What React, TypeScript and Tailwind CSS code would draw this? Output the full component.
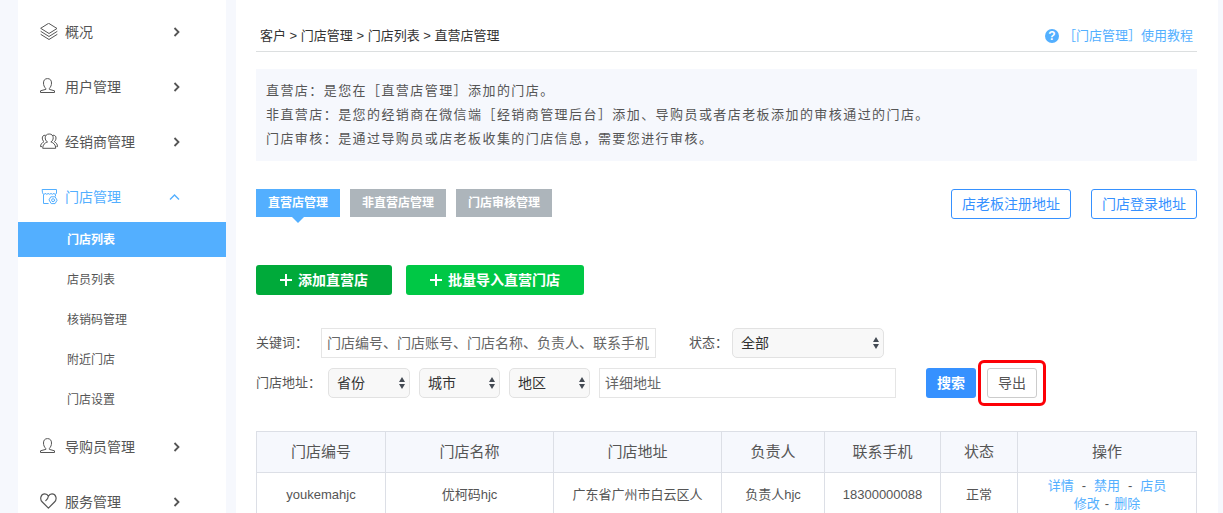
import React from 'react'
import clsx from 'clsx'

const menus = [
  { name: '概况', icon: 'layers' },
  { name: '用户管理', icon: 'user' },
  { name: '经销商管理', icon: 'users' },
  {
    name: '门店管理',
    icon: 'store',
    open: true,
    children: ['门店列表', '店员列表', '核销码管理', '附近门店', '门店设置'],
  },
  { name: '导购员管理', icon: 'user' },
  { name: '服务管理', icon: 'heart' },
]

const tabs = ['直营店管理', '非直营店管理', '门店审核管理']

const stores = [
  {
    code: 'youkemahjc',
    name: '优柯码hjc',
    address: '广东省广州市白云区人',
    owner: '负责人hjc',
    phone: '18300000088',
    status: '正常',
  },
]

function MenuIcon({ type }) {
  return (
    <svg className="h-[18px] w-[18px] shrink-0" viewBox="0 0 18 18" fill="none" stroke="currentColor" strokeWidth="1" strokeLinejoin="round" strokeLinecap="round">
      {type === 'layers' && (
        <>
          <path d="M9 0.5 17 5.5 9 10.5 1 5.5Z" />
          <path d="M1 8.5 9 13.5 17 8.5" />
          <path d="M1 11.5 9 16.5 17 11.5" />
        </>
      )}
      {type === 'user' && (
        <path d="M5.6 10.4C4.3 9 3.5 7.2 3.5 5 3.5 2.2 4.9 0.6 7.5 0.6S11.5 2.2 11.5 5C11.5 7.2 10.7 9 9.4 10.4V11.4L14.5 12.8V14.5H0.5V12.8L5.6 11.4Z" />
      )}
      {type === 'users' && (
        <>
          <path d="M7.2 8.9C5.9 7.9 5.2 6.5 5.2 4.8 5.2 2.4 6.7 1 9.2 1S13.2 2.4 13.2 4.8C13.2 6.5 12.5 7.9 11.2 8.9" />
          <path d="M7.2 8.9C4.8 10 2.7 11.6 2.7 15.3H15.7C15.7 11.6 13.6 10 11.2 8.9" />
          <path d="M5 2.2C3.2 2.2 2.3 3.3 2.3 5 2.3 6.7 2.9 7.8 4 8.7 1.9 9.8 0.5 11.4 0.5 13.6H1.6" />
          <path d="M13.4 2.2C15.1 2.2 16 3.3 16 5 16 6.7 15.4 7.8 14.3 8.7 16.4 9.8 17.5 11.4 17.5 13.6H16.8" />
        </>
      )}
      {type === 'store' && (
        <>
          <path d="M2.5 1.5H16.5V5.2C16.5 6.6 13.8 6.6 13.8 5.2 13.8 6.6 11 6.6 11 5.2 11 6.6 8.2 6.6 8.2 5.2 8.2 6.6 5.3 6.6 5.3 5.2 5.3 6.6 2.5 6.6 2.5 5.2Z" />
          <path d="M3.5 6.8V15.5H8.2M15.5 6.8V8" />
          <path d="M11.2 8.8H15.1L17.1 12.2 15.1 15.6H11.2L9.2 12.2Z" />
          <circle cx="13.1" cy="12.2" r="1.5" />
        </>
      )}
      {type === 'heart' && (
        <path strokeWidth="1.2" d="M8.4 15.2 2.3 9C-0.8 5.8 1.1 0.9 4.8 0.9 6.5 0.9 7.7 1.8 8.4 3.3 9.1 1.8 10.3 0.9 12 0.9 15.7 0.9 17.6 5.8 14.5 9ZM8.4 3.3C8.2 5.4 7.2 6.4 5.8 7.6" />
      )}
    </svg>
  )
}

function MenuArrow({ open }) {
  return (
    <svg className="ml-auto h-3 w-3" viewBox="0 0 12 12" fill="none" stroke="currentColor" strokeWidth={open ? 1.4 : 1.8}>
      <path d={open ? 'M2 8.5 6.5 4 11 8.5' : 'M6.5 2 10.5 6 6.5 10'} />
    </svg>
  )
}

function Sidebar() {
  return (
    <nav className="w-52 shrink-0 bg-white pt-[2px]">
      {menus.map((menu) => (
        <div key={menu.name}>
          <a
            href="#"
            className={clsx('flex h-[55px] items-center pt-1 pr-[46px] pl-[22px] text-sm', menu.open ? 'text-[#53afff]' : 'text-[#555]')}
          >
            <MenuIcon type={menu.icon} />
            <span className="ml-[7px]">{menu.name}</span>
            <MenuArrow open={menu.open} />
          </a>
          {menu.children && (
            <ul className="space-y-[5px]">
              {menu.children.map((child, index) => (
                <li key={child}>
                  <a
                    href="#"
                    className={clsx(
                      'flex h-[35px] items-center pl-[49px] text-xs',
                      index === 0 ? 'bg-[#53afff] font-bold text-white' : 'text-[#555]'
                    )}
                  >
                    {child}
                  </a>
                </li>
              ))}
            </ul>
          )}
        </div>
      ))}
    </nav>
  )
}

function Select({ id, label, value, className }) {
  return (
    <div className={clsx('relative', className)}>
      <select
        id={id}
        aria-label={label}
        className="block h-[30px] w-full appearance-none rounded-[5px] border border-[#e2e2e2] bg-[#f8f8f8] pr-4 pl-2 text-sm text-[#333]"
      >
        <option>{value}</option>
      </select>
      <svg className="pointer-events-none absolute top-[9px] right-1 h-3 w-2" viewBox="0 0 8 12" fill="#444b54">
        <path d="M4 0 7 5H1ZM4 12 7 7H1Z" />
      </svg>
    </div>
  )
}

function AddButton({ children, className }) {
  return (
    <button type="button" className={clsx('flex h-[30px] items-center gap-[6px] rounded-[3px] px-6 text-sm font-bold text-white', className)}>
      <svg className="h-3 w-3" viewBox="0 0 12 12" stroke="currentColor" strokeWidth="2">
        <path d="M6 0V12M0 6H12" />
      </svg>
      {children}
    </button>
  )
}

function Filters() {
  return (
    <form className="mt-[33px] flex flex-col gap-[10px] text-[13px] text-[#555]">
      <div className="flex items-center">
        <label htmlFor="keyword" className="mr-[13px]">关键词：</label>
        <input
          id="keyword"
          type="text"
          placeholder="门店编号、门店账号、门店名称、负责人、联系手机"
          className="h-[30px] w-[335px] border border-[#e5e5e5] px-[5px] text-sm placeholder:text-[#666]"
        />
        <label htmlFor="status" className="ml-[33px] mr-1">状态：</label>
        <Select id="status" label="状态" value="全部" className="w-[152px]" />
      </div>
      <div className="flex items-center">
        <label htmlFor="address" className="mr-[7px]">门店地址：</label>
        <div className="flex gap-[9px]">
          <Select id="province" label="省份" value="省份" className="w-[82px]" />
          <Select id="city" label="城市" value="城市" className="w-[81px]" />
          <Select id="district" label="地区" value="地区" className="w-[81px]" />
          <input
            id="address"
            type="text"
            placeholder="详细地址"
            className="h-[30px] w-[297px] border border-[#e5e5e5] px-[5px] text-sm placeholder:text-[#666]"
          />
        </div>
        <button type="submit" className="ml-[30px] h-[30px] rounded-[3px] bg-[#3691ff] px-[11px] text-sm font-bold text-white">
          搜索
        </button>
        <div className="relative ml-[11px]">
          <button type="button" className="block h-[30px] rounded-[3px] border border-[#ccc] px-[10px] text-sm">
            导出
          </button>
          <span className="pointer-events-none absolute -inset-x-[9px] -inset-y-2 rounded-md border-3 border-[#fd0006]" />
        </div>
      </div>
    </form>
  )
}

function StoreTable() {
  return (
    <table className="mt-[33px] w-full table-fixed border-collapse text-center text-[13px] text-[#555]">
      <colgroup>
        <col className="w-[129px]" />
        <col />
        <col />
        <col className="w-[103px]" />
        <col className="w-[116px]" />
        <col className="w-[77px]" />
        <col className="w-[179px]" />
      </colgroup>
      <thead>
        <tr className="h-[41px] bg-[#f6f8fd] text-[15px]">
          {['门店编号', '门店名称', '门店地址', '负责人', '联系手机', '状态', '操作'].map((title) => (
            <th key={title} className="border border-[#dcdfe6] font-normal">{title}</th>
          ))}
        </tr>
      </thead>
      <tbody>
        {stores.map((store) => (
          <tr key={store.code} className="h-11">
            <td className="border border-[#dcdfe6]">{store.code}</td>
            <td className="border border-[#dcdfe6]">{store.name}</td>
            <td className="border border-[#dcdfe6]">{store.address}</td>
            <td className="border border-[#dcdfe6]">{store.owner}</td>
            <td className="border border-[#dcdfe6]">{store.phone}</td>
            <td className="border border-[#dcdfe6]">{store.status}</td>
            <td className="border border-[#dcdfe6] leading-[18px]">
              <div className="flex justify-center gap-2">
                <a href="#" className="text-[#53afff]">详情</a>
                <span>-</span>
                <a href="#" className="text-[#53afff]">禁用</a>
                <span>-</span>
                <a href="#" className="text-[#53afff]">店员</a>
              </div>
              <div className="flex justify-center gap-[5px]">
                <a href="#" className="text-[#53afff]">修改</a>
                <span>-</span>
                <a href="#" className="text-[#53afff]">删除</a>
              </div>
            </td>
          </tr>
        ))}
      </tbody>
    </table>
  )
}

export default function App() {
  return (
    <div className="flex h-screen gap-[10px] overflow-hidden bg-[#f6f8fd] pr-[5px] pl-[18px] font-['Liberation_Sans','Noto_Sans_CJK_SC',sans-serif]">
      <Sidebar />
      <main className="min-w-0 flex-1 bg-white pr-[21px] pl-5">
        <header className="flex h-[52px] items-end justify-between border-b border-[#dcdfe0] px-1 pb-[5px] text-[13px] leading-5">
          <div className="text-[#333]">客户 &gt; 门店管理 &gt; 门店列表 &gt; 直营店管理</div>
          <a href="#" className="flex items-center gap-1 text-[#53afff]">
            <span className="flex h-[14px] w-[14px] items-center justify-center rounded-full bg-[#53afff] text-xs font-bold text-white">?</span>
            ［门店管理］使用教程
          </a>
        </header>

        <div className="mt-[17px] bg-[#f6f8fd] p-[10px] text-[13px] leading-6 tracking-[0.11em] text-[#555]">
          <p>直营店：是您在［直营店管理］添加的门店。</p>
          <p>非直营店：是您的经销商在微信端［经销商管理后台］添加、导购员或者店老板添加的审核通过的门店。</p>
          <p>门店审核：是通过导购员或店老板收集的门店信息，需要您进行审核。</p>
        </div>

        <div className="mt-7 flex items-start justify-between">
          <div className="flex gap-[10px]">
            {tabs.map((tab, index) => (
              <button
                key={tab}
                type="button"
                className={clsx('relative h-7 px-3 text-xs font-bold text-white', index === 0 ? 'bg-[#53afff]' : 'bg-[#adb5bb]')}
              >
                {tab}
                {index === 0 && (
                  <span className="absolute top-full left-1/2 -translate-x-1/2 border-x-6 border-t-6 border-x-transparent border-t-[#53afff]" />
                )}
              </button>
            ))}
          </div>
          <div className="flex gap-5 text-sm text-[#3691ff]">
            <button type="button" className="h-[30px] rounded-[3px] border border-[#3691ff] px-[10px]">店老板注册地址</button>
            <button type="button" className="h-[30px] rounded-[3px] border border-[#3691ff] px-[10px]">门店登录地址</button>
          </div>
        </div>

        <div className="mt-[46px] flex gap-[14px]">
          <AddButton className="bg-[#00aa3a]">添加直营店</AddButton>
          <AddButton className="bg-[#00c845]">批量导入直营门店</AddButton>
        </div>

        <Filters />
        <StoreTable />
      </main>
    </div>
  )
}
